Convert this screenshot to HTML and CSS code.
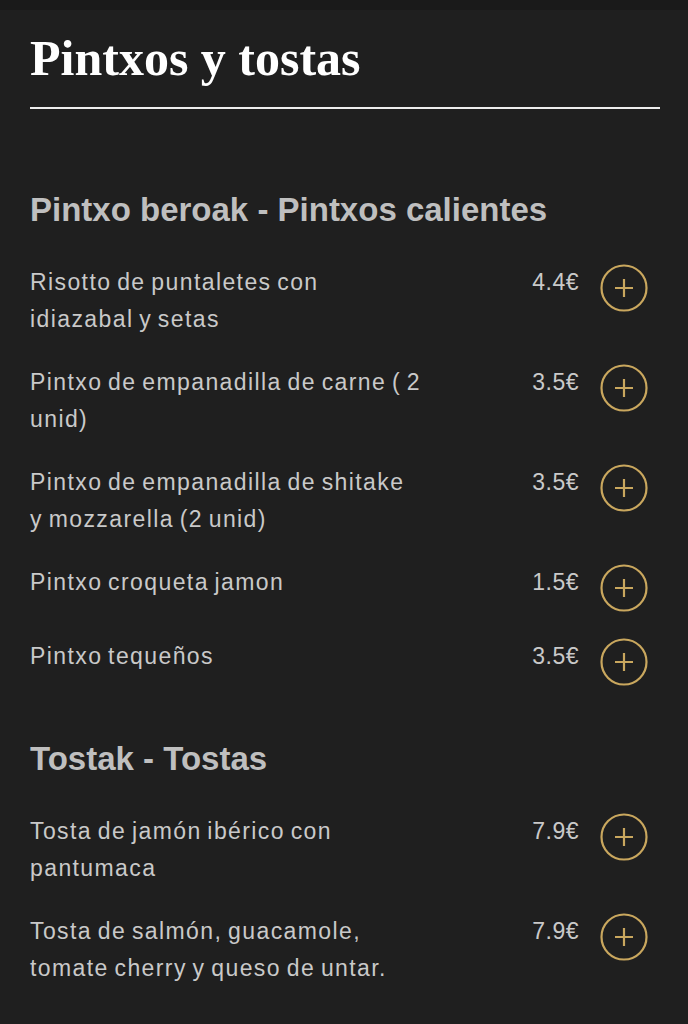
FILE: index.html
```html
<!DOCTYPE html>
<html lang="es">
<head>
    <meta charset="UTF-8">
    <meta name="viewport" content="width=device-width, initial-scale=1.0">
    <title>Pintxos y tostas</title>
    <link rel="stylesheet" href="styles.css">
</head>
<body>

<div class="topbar"></div>

<div class="menu">
    <div class="menu-header">
        <h1 class="menu-title">Pintxos y tostas</h1>
    </div>

    <div class="section section-first">
        <h2 class="section-title">Pintxo beroak - Pintxos calientes</h2>
        <div class="items">
            <div class="item">
                <span class="item-name">Risotto de puntaletes con idiazabal y setas</span>
                <span class="item-price">4.4€</span>
                <button class="add-button" aria-label="Añadir">
                    <svg viewBox="0 0 48 48" width="48" height="48"><circle cx="24" cy="24" r="22.5"/><path d="M24 15v18M15 24h18"/></svg>
                </button>
            </div>
            <div class="item">
                <span class="item-name">Pintxo de empanadilla de carne ( 2 unid)</span>
                <span class="item-price">3.5€</span>
                <button class="add-button" aria-label="Añadir">
                    <svg viewBox="0 0 48 48" width="48" height="48"><circle cx="24" cy="24" r="22.5"/><path d="M24 15v18M15 24h18"/></svg>
                </button>
            </div>
            <div class="item">
                <span class="item-name">Pintxo de empanadilla de shitake y mozzarella (2 unid)</span>
                <span class="item-price">3.5€</span>
                <button class="add-button" aria-label="Añadir">
                    <svg viewBox="0 0 48 48" width="48" height="48"><circle cx="24" cy="24" r="22.5"/><path d="M24 15v18M15 24h18"/></svg>
                </button>
            </div>
            <div class="item">
                <span class="item-name">Pintxo croqueta jamon</span>
                <span class="item-price">1.5€</span>
                <button class="add-button" aria-label="Añadir">
                    <svg viewBox="0 0 48 48" width="48" height="48"><circle cx="24" cy="24" r="22.5"/><path d="M24 15v18M15 24h18"/></svg>
                </button>
            </div>
            <div class="item">
                <span class="item-name">Pintxo tequeños</span>
                <span class="item-price">3.5€</span>
                <button class="add-button" aria-label="Añadir">
                    <svg viewBox="0 0 48 48" width="48" height="48"><circle cx="24" cy="24" r="22.5"/><path d="M24 15v18M15 24h18"/></svg>
                </button>
            </div>
        </div>
    </div>

    <div class="section">
        <h2 class="section-title">Tostak - Tostas</h2>
        <div class="items">
            <div class="item">
                <span class="item-name">Tosta de jamón ibérico con pantumaca</span>
                <span class="item-price">7.9€</span>
                <button class="add-button" aria-label="Añadir">
                    <svg viewBox="0 0 48 48" width="48" height="48"><circle cx="24" cy="24" r="22.5"/><path d="M24 15v18M15 24h18"/></svg>
                </button>
            </div>
            <div class="item">
                <span class="item-name">Tosta de salmón, guacamole, tomate cherry y queso de untar.</span>
                <span class="item-price">7.9€</span>
                <button class="add-button" aria-label="Añadir">
                    <svg viewBox="0 0 48 48" width="48" height="48"><circle cx="24" cy="24" r="22.5"/><path d="M24 15v18M15 24h18"/></svg>
                </button>
            </div>
        </div>
    </div>
</div>

</body>
</html>
```

FILE: styles.css
```css
body {
    background-color: #1f1f1f;
    font-family: 'Liberation Sans', Arial, sans-serif;
    color: #c9c9c9;
    margin: 0;
}

.topbar {
    height: 10px;
    background-color: #1a1a1a;
}

.menu {
    padding: 0 28px 40px 30px;
}

.menu-header {
    padding-top: 20px;
    padding-bottom: 21px;
    border-bottom: 2px solid #ececec;
}

.menu-title {
    font-family: 'Liberation Serif', 'Times New Roman', serif;
    font-weight: bold;
    font-size: 50px;
    line-height: 56px;
    color: #ffffff;
    margin: 0;
}

.section {
    margin-top: 53px;
}

.section-first {
    margin-top: 81px;
}

.section-title {
    font-size: 33px;
    line-height: 40px;
    font-weight: bold;
    color: #bfbfbf;
    margin: 0 0 34px 0;
}

.items {
    display: flex;
    flex-direction: column;
    gap: 26px;
}

.item {
    display: flex;
    align-items: flex-start;
    padding-right: 12px;
    font-size: 23px;
    line-height: 37px;
    letter-spacing: 1.4px;
    word-spacing: -2px;
}

.item-name {
    width: 392px;
}

.item-price {
    margin-left: auto;
    letter-spacing: 0.5px;
}

.add-button {
    width: 48px;
    height: 48px;
    margin-left: 21px;
    padding: 0;
    border: none;
    background: none;
    cursor: pointer;
    flex-shrink: 0;
}

.add-button svg {
    display: block;
    fill: none;
    stroke: #c9a75e;
    stroke-width: 2.2;
}
```
